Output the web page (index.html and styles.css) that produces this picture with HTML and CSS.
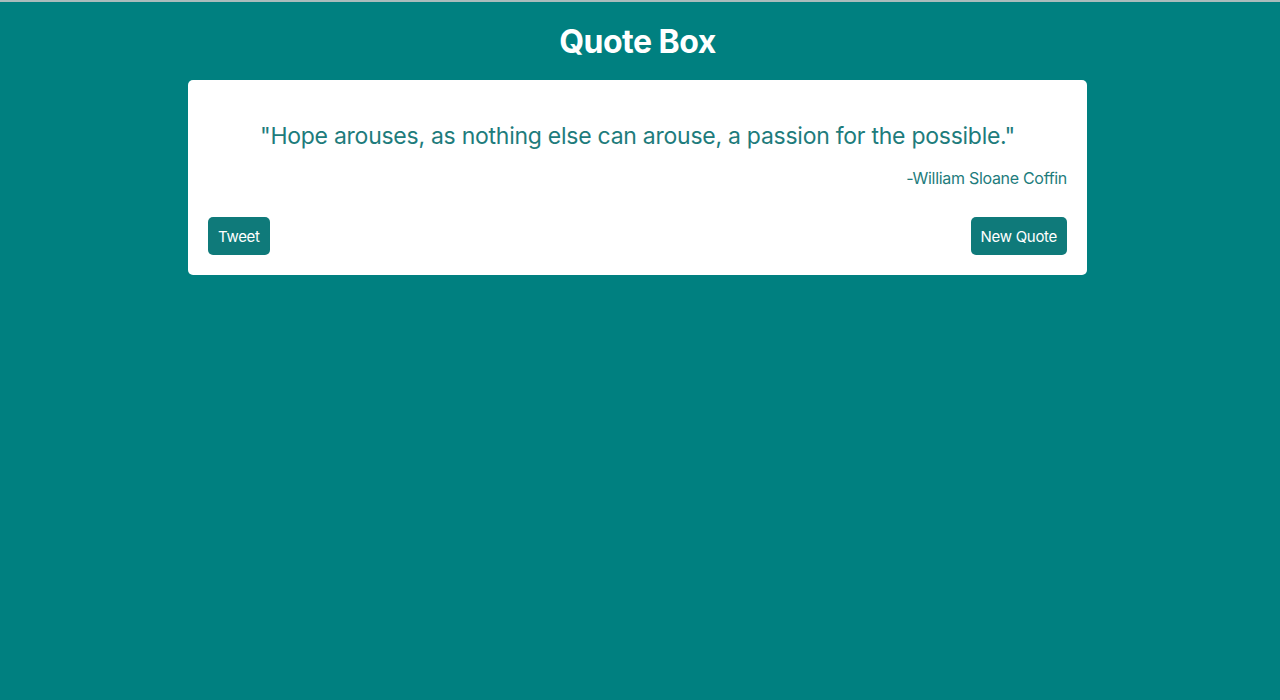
FILE: index.html
```html
<!DOCTYPE html>
<html lang="en">
<head>
<meta charset="utf-8">
<title>Quote Box</title>
<link rel="stylesheet" href="styles.css">
</head>
<body>
<div class="page">
  <h1 class="title">Quote Box</h1>
  <div class="card" id="quote-box">
    <p class="quote" id="text">"Hope arouses, as nothing else can arouse, a passion for the possible."</p>
    <p class="author" id="author">-William Sloane Coffin</p>
    <div class="actions">
      <a class="btn" id="tweet-quote">Tweet</a>
      <button class="btn" id="new-quote">New Quote</button>
    </div>
  </div>
</div>
</body>
</html>
```

FILE: styles.css
```css
html, body {
  margin: 0;
  padding: 0;
  height: 100%;
}
body {
  background: #008080;
  border-top: 2px solid #a9bcbc;
  box-sizing: border-box;
  font-family: Inter, "Noto Sans", "Liberation Sans", sans-serif;
}
.page {
  width: 1275px;
  padding-top: 20px;
  display: flex;
  flex-direction: column;
  align-items: center;
}
.title {
  margin: 0 0 18px;
  font-size: 32px;
  line-height: 40px;
  font-weight: 700;
  letter-spacing: -0.5px;
  color: #ffffff;
}
.card {
  width: 899px;
  box-sizing: border-box;
  background: #ffffff;
  border-radius: 5px;
  padding: 20px;
}
.quote {
  margin: 18px 0 0;
  font-size: 23px;
  line-height: 36px;
  letter-spacing: -0.26px;
  text-align: center;
  color: #1e7c7c;
}
.author {
  margin: 12px 0 0;
  font-size: 16px;
  line-height: 24px;
  letter-spacing: -0.3px;
  text-align: right;
  color: #1e7c7c;
}
.actions {
  margin-top: 27px;
  display: flex;
  justify-content: space-between;
}
.btn {
  display: inline-block;
  border: none;
  background: #0f7a7a;
  color: #ffffff;
  font-family: inherit;
  font-size: 15px;
  line-height: 24px;
  letter-spacing: -0.3px;
  padding: 8px 10px 6px;
  border-radius: 5px;
  cursor: pointer;
}
```
